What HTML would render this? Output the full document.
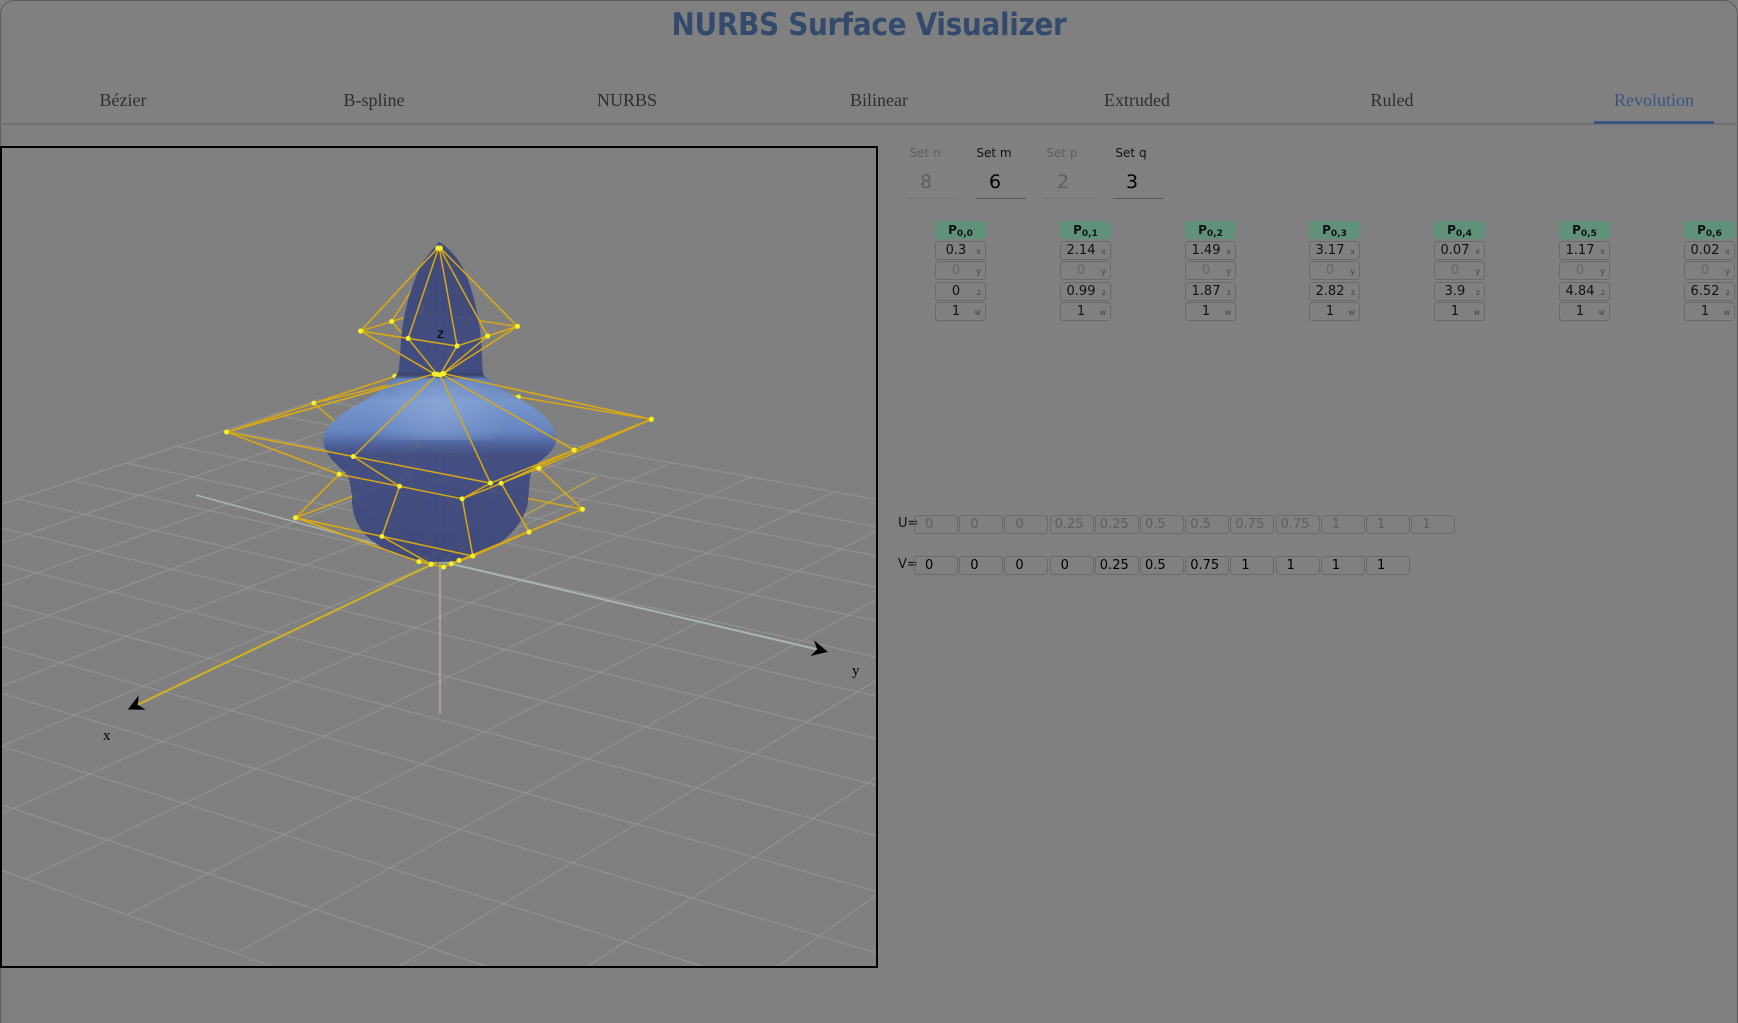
<!DOCTYPE html>
<html><head><meta charset="utf-8">
<style>
*{box-sizing:border-box;margin:0;padding:0}
html,body{width:1738px;height:1023px;overflow:hidden}
body{background:#808080;position:relative;font-family:"Liberation Sans",sans-serif}
.frame{position:absolute;left:0;top:0;width:1738px;height:1023px;border:1px solid #5c5c5c;border-radius:14px 14px 0 0;border-bottom:none}
.title{position:absolute;left:0;width:1738px;top:7px;text-align:center;font:bold 31px "DejaVu Sans Condensed","DejaVu Sans",sans-serif;color:#344a6d;letter-spacing:-0.3px}
.tab{position:absolute;top:90px;font:18px "Liberation Serif",serif;color:#2e2e2e;transform:translateX(-50%)}
.hline{position:absolute;left:0;top:123px;width:1738px;height:2px;background:#717171}
.ul{position:absolute;left:1594px;top:121px;width:120px;height:3px;background:#3d5380}
.canvasbox{position:absolute;left:0;top:146px;width:878px;height:822px;border:2px solid #000}
svg.scene{position:absolute;left:0;top:146px;overflow:hidden}
.lbl{position:absolute;top:146px;font:12px "DejaVu Sans",sans-serif;transform:translateX(-50%)}
.val{position:absolute;top:169px;width:50px;height:30px;border-bottom:1px solid #555;font:19px "DejaVu Sans",sans-serif;text-align:center;line-height:26px;padding-right:12px}
.ph{position:absolute;top:221px;width:51px;height:18px;background:#5f917b;border-radius:3px;text-align:center;font:bold 12px "DejaVu Sans",sans-serif;color:#111;line-height:18px}
.ph sub{font-size:9px;vertical-align:-2px;line-height:0}
.pr{position:absolute;width:51px;height:19px;border:1px solid #6a6a6a;border-radius:3px;font:13px "DejaVu Sans",sans-serif;line-height:17px;color:#111}
.pr span.v{position:absolute;left:0;width:40px;text-align:center}
.pr span.s{position:absolute;right:4px;font-size:8px;color:#444;top:1px}
.pr.g span.v{color:#666}
.kl{position:absolute;left:898px;font:13px "DejaVu Sans",sans-serif;color:#111}
.kb{position:absolute;width:44px;height:19px;border:1px solid #6a6a6a;border-radius:3px;font:13px "DejaVu Sans",sans-serif;line-height:17px;padding-left:4px}
</style></head><body>
<div class="frame"></div>
<div class="title">NURBS Surface Visualizer</div>
<div class="tab" style="left:123px">Bézier</div>
<div class="tab" style="left:374px">B-spline</div>
<div class="tab" style="left:627px">NURBS</div>
<div class="tab" style="left:879px">Bilinear</div>
<div class="tab" style="left:1137px">Extruded</div>
<div class="tab" style="left:1392px">Ruled</div>
<div class="tab" style="left:1654px;color:#3d5380">Revolution</div>
<div class="hline"></div>
<div class="ul"></div>

<svg class="scene" width="878" height="822" viewBox="0 146 878 822" id="sc">
<defs>
<linearGradient id="bg" x1="0" y1="242" x2="0" y2="562" gradientUnits="userSpaceOnUse">
<stop offset="0" stop-color="#3b4579"/>
<stop offset="0.40" stop-color="#3d4a82"/>
<stop offset="0.415" stop-color="#35406f"/>
<stop offset="0.43" stop-color="#5b7bbb"/>
<stop offset="0.50" stop-color="#7497d1"/>
<stop offset="0.59" stop-color="#6486c6"/>
<stop offset="0.63" stop-color="#4c62a0"/>
<stop offset="0.665" stop-color="#3f4b83"/>
<stop offset="1" stop-color="#3c467b"/>
</linearGradient>
<radialGradient id="hl" cx="440" cy="405" r="70" gradientUnits="userSpaceOnUse">
<stop offset="0" stop-color="#9ab4e0" stop-opacity="0.5"/>
<stop offset="1" stop-color="#9ab4e0" stop-opacity="0"/>
</radialGradient>
</defs>
<g id="grid"></g>
<g id="axes"></g>
<g id="netback"></g>
<path id="body" fill="url(#bg)" opacity="0.93" d="M439,242 C430,252 422,262 418,272 C410,290 403,315 401,340 C400,352 400,365 398,373 C392,383 380,392 362,402 C340,414 325,426 323,440 C324,452 333,462 345,472 C352,480 351,495 353,510 C356,525 364,538 385,549 C405,558 425,562 440,562 C458,562 475,557 490,549 C510,538 522,523 527,507 C530,492 528,478 533,467 C545,457 556,450 556,440 C556,426 545,414 528,404 C512,394 492,385 483,374 C482,362 482,345 480,330 C476,300 468,275 458,260 C452,252 446,246 439,242 Z"/>
<path fill="url(#hl)" d="M398,378 C380,392 340,414 323,440 L556,440 C545,414 500,392 483,378 Z"/>
<g id="netfront"></g>
<g font-family="Liberation Serif,serif" font-size="15" fill="#000">
<text x="103" y="740">x</text>
<text x="852" y="675">y</text>
<text x="437" y="338" font-size="13" font-family="DejaVu Sans,sans-serif">z</text>
</g>
</svg>
<div class="canvasbox"></div>

<div class="lbl" style="left:925px;color:#5e5e5e">Set n</div>
<div class="lbl" style="left:994px;color:#111">Set m</div>
<div class="lbl" style="left:1062px;color:#5e5e5e">Set p</div>
<div class="lbl" style="left:1131px;color:#111">Set q</div>
<div class="val" style="left:907px;color:#5e5e5e;border-bottom:1px dotted #6a6a6a">8</div>
<div class="val" style="left:976px;color:#000">6</div>
<div class="val" style="left:1044px;color:#5e5e5e;border-bottom:1px dotted #6a6a6a">2</div>
<div class="val" style="left:1113px;color:#000">3</div>

<div id="pts"></div>
<div class="kl" style="top:516px">U=</div>
<div class="kl" style="top:557px">V=</div>
<div id="knots"></div>

<script>
(function(){
var NS="http://www.w3.org/2000/svg";
function L(g,x1,y1,x2,y2,st,w,op){var l=document.createElementNS(NS,"line");l.setAttribute("x1",x1);l.setAttribute("y1",y1);l.setAttribute("x2",x2);l.setAttribute("y2",y2);l.setAttribute("stroke",st);l.setAttribute("stroke-width",w);if(op!=null)l.setAttribute("opacity",op);document.getElementById(g).appendChild(l);}
function C(g,x,y,r,f,op){var c=document.createElementNS(NS,"circle");c.setAttribute("cx",x);c.setAttribute("cy",y);c.setAttribute("r",r);c.setAttribute("fill",f);if(op!=null)c.setAttribute("opacity",op);document.getElementById(g).appendChild(c);}
var O=[439,561],ex=[-26,11],ey=[41,9];
function G(X,Y){var f=1/(1-0.012*(X+Y));return [O[0]+(X*ex[0]+Y*ey[0])*f,O[1]+(X*ex[1]+Y*ey[1])*f];}
var A=-10,B=18;
for(var i=A;i<=B;i+=2){var a=G(i,A),b=G(i,B);L("grid",a[0],a[1],b[0],b[1],"#9a9a9a",1,0.8);a=G(A,i);b=G(B,i);L("grid",a[0],a[1],b[0],b[1],"#9a9a9a",1,0.8);}
L("axes",439,561,596,477,"#c9b04a",1.5,0.7);
L("axes",439,561,135,706,"#d2b21e",2);
L("axes",196,495,439,561,"#a9b5b3",1.5);
L("axes",439,561,820,650,"#a9b5b3",2);
L("axes",440,714,440,245,"#d8c8a4",1.2,0.8);
function arrow(x,y,dx,dy){var n=Math.hypot(dx,dy);dx/=n;dy/=n;var p=document.createElementNS(NS,"polygon");var px=-dy,py=dx;p.setAttribute("points",(x+dx*8)+","+(y+dy*8)+" "+(x-dx*8+px*8)+","+(y-dy*8+py*8)+" "+(x-dx*3)+","+(y-dy*3)+" "+(x-dx*8-px*8)+","+(y-dy*8-py*8));p.setAttribute("fill","#000");document.getElementById("axes").appendChild(p);}
arrow(135,706,-304,145);arrow(820,650,381,89);
function P(X,Y,Z){var a=G(X,Y);var f=1/(1-0.012*(X+Y));return [a[0],a[1]-Z*48*f];}
var rings=[[0.3,0],[2.14,0.99],[1.49,1.87],[3.17,2.82],[0.07,3.9],[1.17,4.84],[0.02,6.52]];
var sq=[[1,0],[1,1],[0,1],[-1,1],[-1,0],[-1,-1],[0,-1],[1,-1],[1,0]];
var pts=rings.map(function(r){return sq.map(function(s){return {p:P(r[0]*s[0],r[0]*s[1],r[1]),d:s[0]+s[1]};});});
var col="#d8a815";
function seg(a,b){var front=(a.d+b.d)>=0;L("netback",a.p[0],a.p[1],b.p[0],b.p[1],col,1.5);if(front)L("netfront",a.p[0],a.p[1],b.p[0],b.p[1],col,1.5);}
for(var j=0;j<pts.length;j++)for(var k=0;k<8;k++){seg(pts[j][k],pts[j][k+1]);}
for(var j=0;j<pts.length-1;j++)for(var k=0;k<8;k++){seg(pts[j][k],pts[j+1][k]);}
for(var j=0;j<pts.length;j++)for(var k=0;k<8;k++){var q=pts[j][k];C("netback",q.p[0],q.p[1],2.5,"#f2f22a");if(q.d>=0)C("netfront",q.p[0],q.p[1],2.5,"#f2f22a");}
var vals=[["0.3","0","0","1"],["2.14","0","0.99","1"],["1.49","0","1.87","1"],["3.17","0","2.82","1"],["0.07","0","3.9","1"],["1.17","0","4.84","1"],["0.02","0","6.52","1"]];
var sfx=["x","y","z","w"],tops=[241,261,282,302],h="";
for(var i=0;i<7;i++){var x=935+Math.round(i*124.8);
h+='<div class="ph" style="left:'+x+'px">P<sub>0,'+i+'</sub></div>';
for(var r=0;r<4;r++){h+='<div class="pr'+(r==1?' g':'')+'" style="left:'+x+'px;top:'+tops[r]+'px"><span class="v">'+vals[i][r]+'</span><span class="s">'+sfx[r]+'</span></div>';}}
document.getElementById("pts").innerHTML=h;
var U=["0","0","0","0.25","0.25","0.5","0.5","0.75","0.75","1","1","1"],V=["0","0","0","0","0.25","0.5","0.75","1","1","1","1"];
h="";
U.forEach(function(u,i){h+='<div class="kb" style="left:'+(914+i*45.2)+'px;top:515px;color:#5e5e5e;'+(u.length>1?'':'padding-left:10px')+'">'+u+'</div>';});
V.forEach(function(u,i){h+='<div class="kb" style="left:'+(914+i*45.2)+'px;top:556px;color:#000;'+(u.length>1?'':'padding-left:10px')+'">'+u+'</div>';});
document.getElementById("knots").innerHTML=h;
})();
</script>
</body></html>
